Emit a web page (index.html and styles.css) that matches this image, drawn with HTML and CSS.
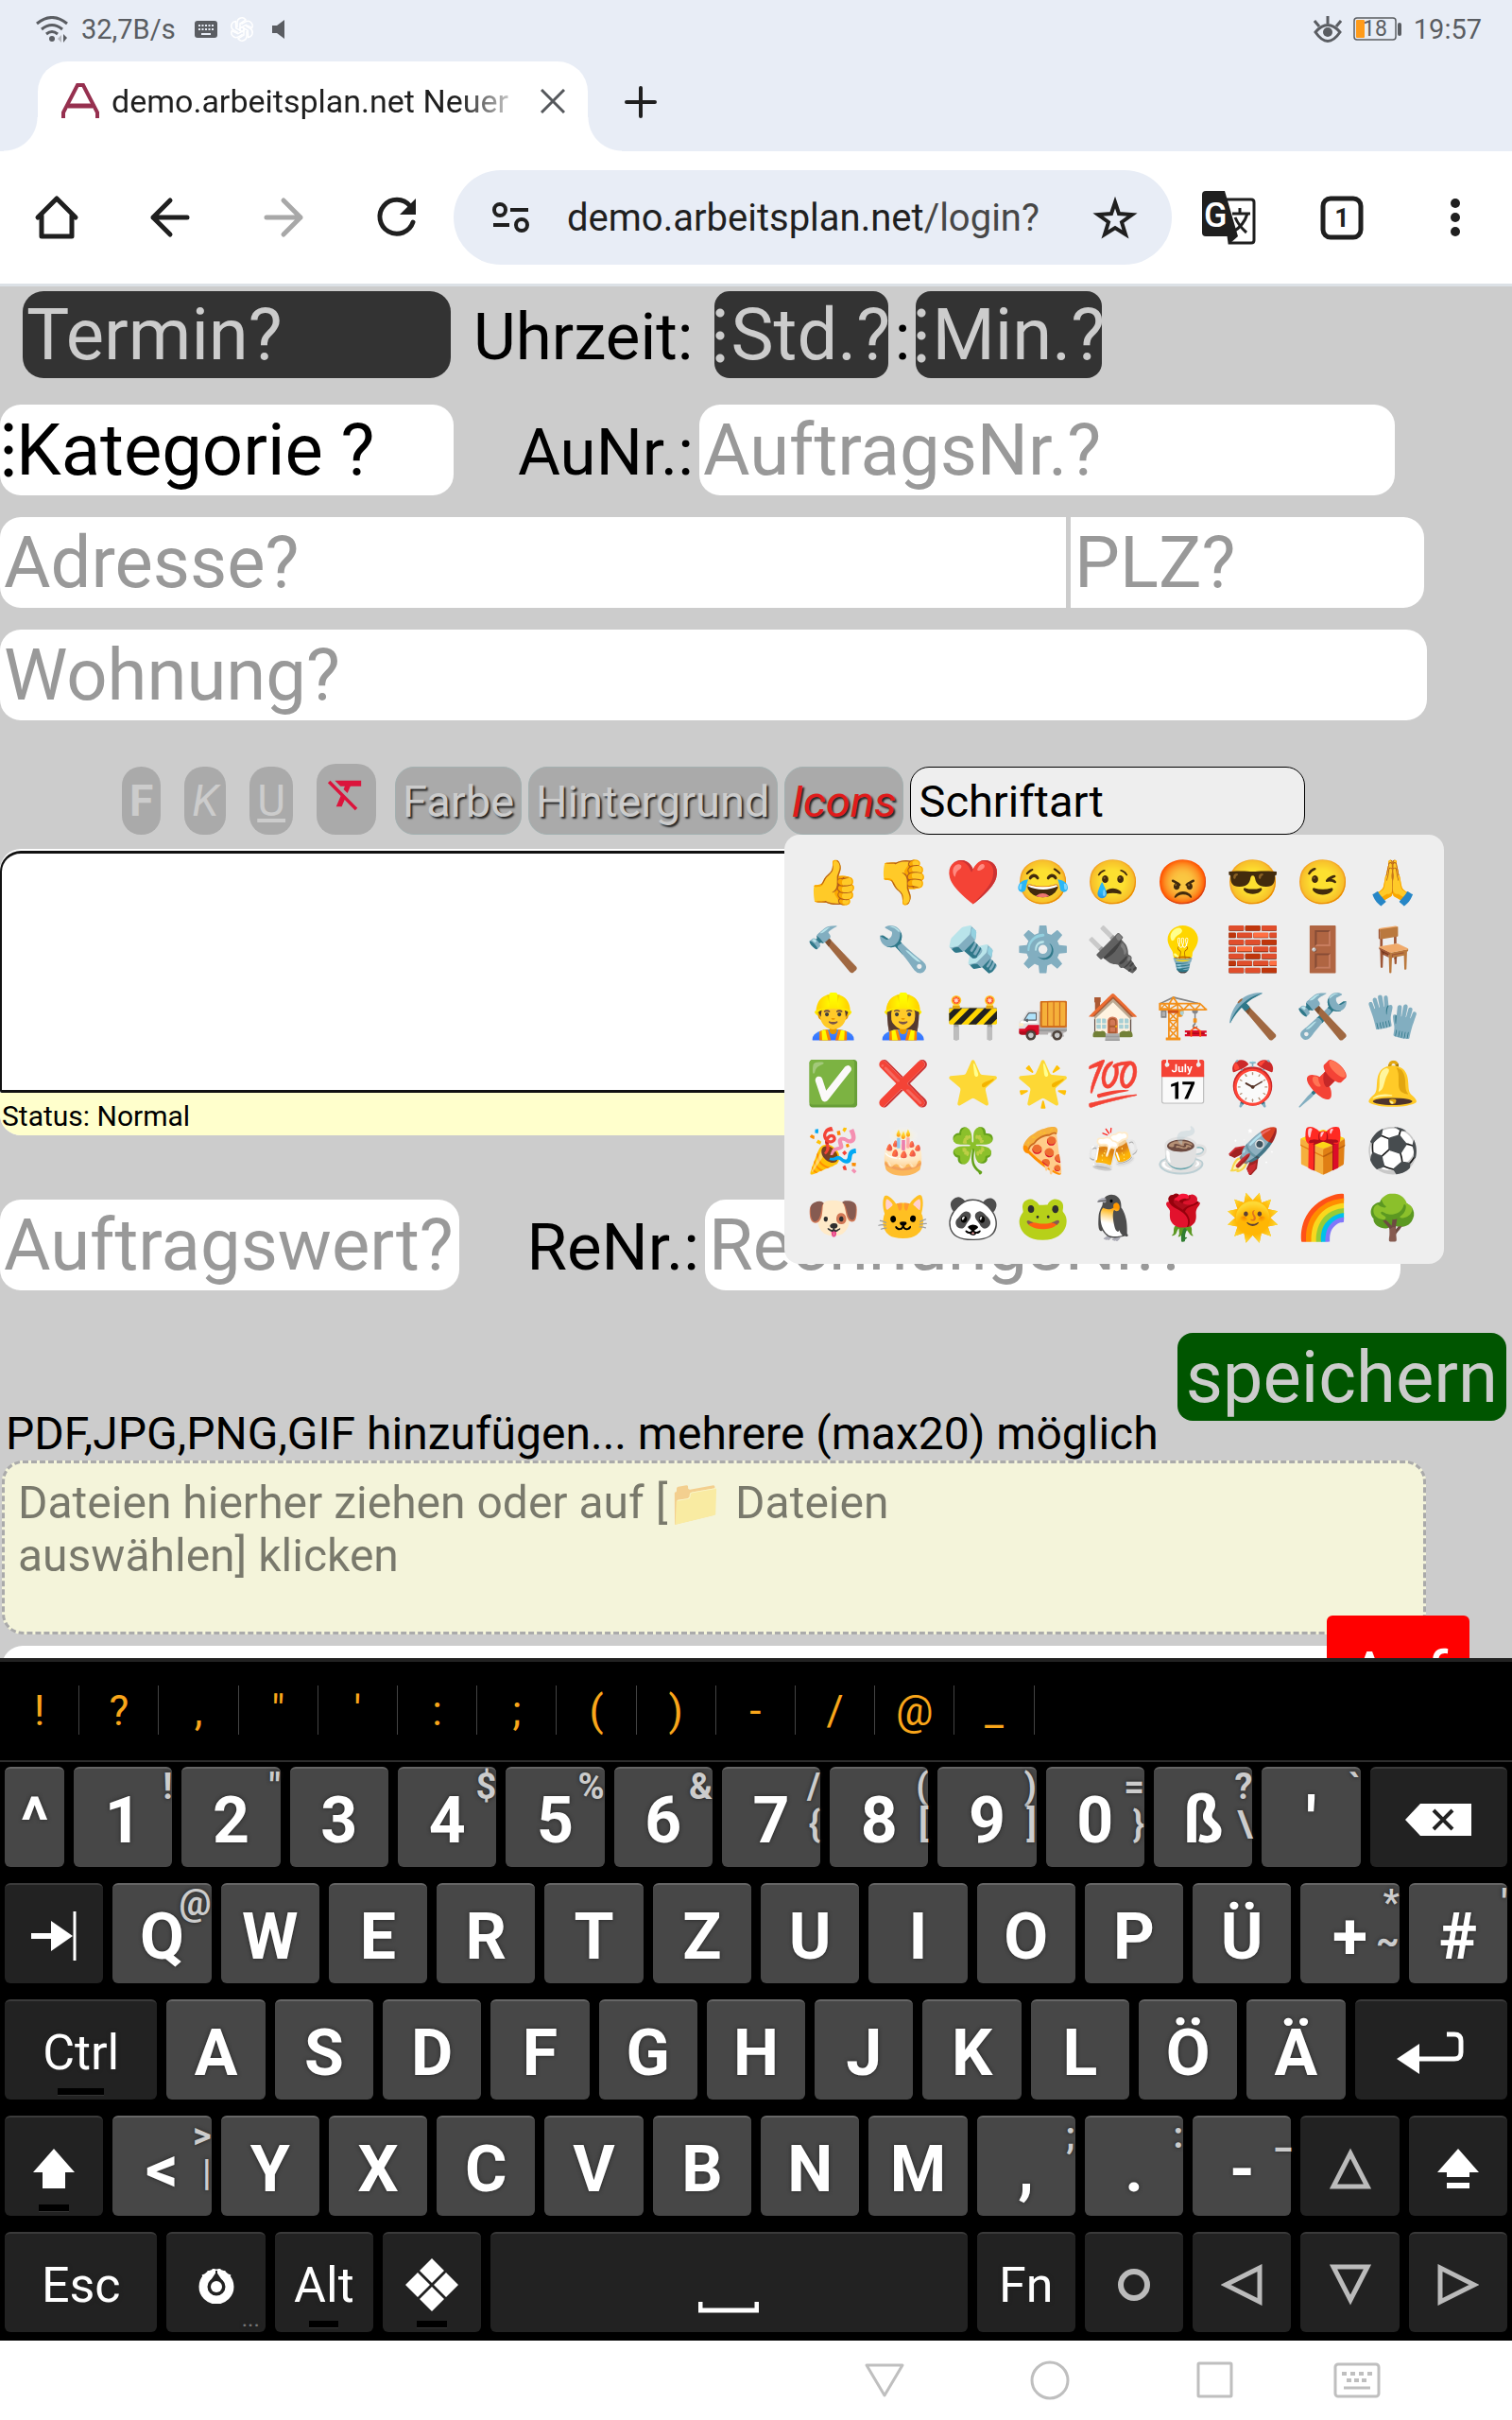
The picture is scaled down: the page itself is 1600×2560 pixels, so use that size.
FILE: index.html
```html
<!DOCTYPE html>
<html lang="de">
<head>
    <meta charset="UTF-8">
    <meta name="viewport" content="width=device-width, initial-scale=1.0">
    <title>demo.arbeitsplan.net Neuer Auftrag</title>
    <link rel="stylesheet" href="styles.css">
</head>
<body>
    <!-- System status bar -->
    <div class="status-bar">
        <svg class="status-icon" width="34" height="28" viewBox="0 0 34 28" fill="none" stroke="#5a5d62" stroke-width="3">
            <path d="M1 8Q17-5 33 8"/><path d="M6 14Q17 5 28 14"/><path d="M11 19Q17 14 23 19"/>
            <circle cx="17" cy="24" r="3" fill="#5a5d62" stroke="none"/>
            <path d="M27 20v8l-4-4z" fill="#b5b8be" stroke="none"/><path d="M29 19v9l4-5z" fill="#5a5d62" stroke="none"/>
        </svg>
        <span class="net-speed">32,7B/s</span>
        <svg class="status-icon" width="24" height="18" viewBox="0 0 24 18">
            <rect width="24" height="18" rx="3" fill="#5a5d62"/>
            <path d="M4 5h16M4 9h16" stroke="#e8edf6" stroke-width="2" stroke-dasharray="2 1.5"/>
            <path d="M7 14h10" stroke="#e8edf6" stroke-width="2"/>
        </svg>
        <svg class="status-icon" width="28" height="28" viewBox="0 0 28 28" fill="none" stroke="#fff" stroke-width="1.5">
            <g id="knot"><path d="M9 12V6a5 5 0 0 1 9-2l-6 4v8"/></g>
            <use href="#knot" transform="rotate(60 14 14)"/><use href="#knot" transform="rotate(120 14 14)"/>
            <use href="#knot" transform="rotate(180 14 14)"/><use href="#knot" transform="rotate(240 14 14)"/>
            <use href="#knot" transform="rotate(300 14 14)"/>
        </svg>
        <svg class="status-icon speaker" width="14" height="20" viewBox="0 0 14 20" fill="#5a5d62"><path d="M0 6h5l8-6v20l-8-6H0z"/></svg>
        <div class="status-right">
            <svg width="30" height="28" viewBox="0 0 30 28" fill="none" stroke="#5a5d62" stroke-width="3">
                <path d="M2 17Q15 2 28 17Q15 36 2 17z"/><path d="M15 0v8M1 5l5 6M29 5l-5 6"/>
                <circle cx="15" cy="17" r="5" fill="#5a5d62" stroke="none"/>
            </svg>
            <svg width="52" height="26" viewBox="0 0 52 26">
                <rect x="1" y="1" width="44" height="23" rx="3" fill="none" stroke="#5a5d62" stroke-width="1.5"/>
                <rect x="3" y="3" width="9" height="19" rx="1" fill="#ff9b1a"/>
                <rect x="47" y="6" width="4" height="14" rx="2" fill="#5a5d62"/>
                <text x="23" y="20" text-anchor="middle" class="battery-text">18</text>
            </svg>
            <span>19:57</span>
        </div>
    </div>

    <!-- Browser tabs -->
    <div class="tab-strip">
        <div class="tab">
            <svg width="42" height="40" viewBox="0 0 42 40" fill="none" stroke="#96304f">
                <path d="M3 38v-6L18 3h6l15 29v6" stroke-width="4"/><path d="M8 25h26" stroke-width="5"/>
            </svg>
            <span class="tab-title">demo.arbeitsplan.net Neuer</span>
            <button class="tab-close" aria-label="Tab schließen">
                <svg width="26" height="26" viewBox="0 0 26 26" stroke="#55585c" stroke-width="3"><path d="M1 1l24 24M25 1L1 25"/></svg>
            </button>
        </div>
        <button class="tab-new" aria-label="Neuer Tab">
            <svg width="34" height="34" viewBox="0 0 34 34" stroke="#1f1f1f" stroke-width="4" stroke-linecap="round"><path d="M17 2v30M2 17h30"/></svg>
        </button>
    </div>

    <div class="browser-bar">
        <button class="bar-button" aria-label="Startseite">
            <svg width="48" height="48" viewBox="0 0 48 48" fill="none" stroke="#1f1f1f" stroke-width="5" stroke-linejoin="round" stroke-linecap="round"><path d="M4 24L24 4l20 20M8 22v22h32V22"/></svg>
        </button>
        <button class="bar-button" aria-label="Zurück">
            <svg width="44" height="44" viewBox="0 0 44 44" fill="none" stroke="#1f1f1f" stroke-width="5" stroke-linecap="round" stroke-linejoin="round"><path d="M40 22H4M22 4L4 22l18 18"/></svg>
        </button>
        <button class="bar-button" aria-label="Vorwärts" disabled>
            <svg width="44" height="44" viewBox="0 0 44 44" fill="none" stroke="#a8a8a8" stroke-width="5" stroke-linecap="round" stroke-linejoin="round"><path d="M4 22h36M22 4l18 18-18 18"/></svg>
        </button>
        <button class="bar-button" aria-label="Neu laden">
            <svg width="44" height="44" viewBox="0 0 44 44" fill="none" stroke="#1f1f1f" stroke-width="5" stroke-linecap="round"><path d="M39 27A18 18 0 1 1 36 10"/><path d="M42 2v17H25z" fill="#1f1f1f" stroke="none"/></svg>
        </button>
        <div class="omnibox">
            <svg class="omni-icon" width="120" height="40" viewBox="0 0 120 40" fill="none" stroke="#1f1f1f" stroke-width="4">
                <circle cx="49" cy="12" r="6"/><path d="M60 12h19M42 28h17"/><circle cx="72" cy="28" r="6"/>
            </svg>
            <a class="url" href="#">demo.arbeitsplan.net<span>/login?</span></a>
            <button class="bar-button" aria-label="Lesezeichen">
                <svg width="48" height="48" viewBox="0 0 48 48" fill="none" stroke="#1f1f1f" stroke-width="4"><path d="M24 8l4 12 14 1-11 8 4 13-11-7-11 7 4-13-11-8 14-1z"/></svg>
            </button>
        </div>
        <button class="bar-button" aria-label="Übersetzen">
            <svg width="58" height="58" viewBox="0 0 58 58">
                <path d="M24 10h29q3 0 3 3v40q0 3-3 3H30z" fill="#fff" stroke="#1f1f1f" stroke-width="3"/>
                <path d="M5 1h20l14 48H5q-4 0-4-4V5q0-4 4-4z" fill="#1f1f1f"/><path d="M28 49h11l-9 8z" fill="#1f1f1f"/>
                <text x="3" y="39" class="tr-g">G</text>
                <g fill="none" stroke="#1f1f1f" stroke-width="3"><path d="M33 25h19M41 19v6M49 25q-4 13-15 19M36 29q4 9 12 16"/></g>
            </svg>
        </button>
        <button class="bar-button" aria-label="Tabs">
            <svg width="48" height="48" viewBox="0 0 48 48"><rect x="4" y="4" width="40" height="41" rx="8" fill="none" stroke="#1f1f1f" stroke-width="5"/><text x="24" y="34" text-anchor="middle" class="tab-count">1</text></svg>
        </button>
        <button class="bar-button" aria-label="Menü">
            <svg width="12" height="42" viewBox="0 0 12 42" fill="#1f1f1f"><circle cx="6" cy="6" r="5"/><circle cx="6" cy="21" r="5"/><circle cx="6" cy="36" r="5"/></svg>
        </button>
    </div>

    <!-- Order form -->
    <main class="page">
        <form class="order-form">
            <div class="row row-date">
                <input class="field dark date" type="text" placeholder="Termin?" aria-label="Termin">
                <label class="label" for="std">Uhrzeit:</label>
                <span class="picker hour"><select class="field dark" id="std"><option>Std.?</option></select></span>
                <span class="label colon">:</span>
                <span class="picker minute"><select class="field dark" aria-label="Minuten"><option>Min.?</option></select></span>
            </div>
            <div class="row">
                <span class="picker category"><select class="field" aria-label="Kategorie"><option>Kategorie ?</option></select></span>
                <label class="label wide" for="aunr">AuNr.:</label>
                <input class="field number" id="aunr" type="text" placeholder="AuftragsNr.?">
            </div>
            <div class="row address-row">
                <input class="field address" type="text" placeholder="Adresse?" aria-label="Adresse">
                <input class="field zip" type="text" placeholder="PLZ?" aria-label="PLZ">
            </div>
            <div class="row">
                <input class="field flat" type="text" placeholder="Wohnung?" aria-label="Wohnung">
            </div>

            <div class="tools">
                <div class="tools-format">
                    <button type="button" class="tool small"><b>F</b></button>
                    <button type="button" class="tool small"><i>K</i></button>
                    <button type="button" class="tool small"><u>U</u></button>
                    <button type="button" class="tool clear" aria-label="Formatierung entfernen">
                        <svg width="47" height="47" viewBox="0 0 24 24" fill="#dc143c"><path d="M3.27 5L2 6.27l6.97 6.97L6.5 19h3l1.57-3.66L16.73 21 18 19.73 3.55 5.27 3.27 5zM6 5v.18L8.82 8h2.4l-.72 1.68 2.1 2.1L14.21 8H20V5H6z"/></svg>
                    </button>
                </div>
                <div class="tools-menu">
                    <button type="button" class="tool menu">Farbe</button>
                    <button type="button" class="tool menu">Hintergrund</button>
                    <div class="icons-menu">
                        <button type="button" class="tool menu active">Icons</button>
                        <div class="emoji-popup">
                            <button type="button">👍</button><button type="button">👎</button><button type="button">❤️</button><button type="button">😂</button><button type="button">😢</button><button type="button">😡</button><button type="button">😎</button><button type="button">😉</button><button type="button">🙏</button>
                            <button type="button">🔨</button><button type="button">🔧</button><button type="button">🔩</button><button type="button">⚙️</button><button type="button">🔌</button><button type="button">💡</button><button type="button">🧱</button><button type="button">🚪</button><button type="button">🪑</button>
                            <button type="button">👷‍♂️</button><button type="button">👷‍♀️</button><button type="button">🚧</button><button type="button">🚚</button><button type="button">🏠</button><button type="button">🏗️</button><button type="button">⛏️</button><button type="button">🛠️</button><button type="button">🧤</button>
                            <button type="button">✅</button><button type="button">❌</button><button type="button">⭐</button><button type="button">🌟</button><button type="button">💯</button><button type="button">📅</button><button type="button">⏰</button><button type="button">📌</button><button type="button">🔔</button>
                            <button type="button">🎉</button><button type="button">🎂</button><button type="button">🍀</button><button type="button">🍕</button><button type="button">🍻</button><button type="button">☕</button><button type="button">🚀</button><button type="button">🎁</button><button type="button">⚽</button>
                            <button type="button">🐶</button><button type="button">🐱</button><button type="button">🐼</button><button type="button">🐸</button><button type="button">🐧</button><button type="button">🌹</button><button type="button">🌞</button><button type="button">🌈</button><button type="button">🌳</button>
                        </div>
                    </div>
                    <select class="font-select" aria-label="Schriftart"><option>Schriftart</option></select>
                </div>
            </div>

            <div class="editor">
                <textarea class="editor-text" aria-label="Beschreibung"></textarea>
                <div class="editor-status">Status: Normal</div>
            </div>

            <div class="row row-value">
                <input class="field value" type="text" placeholder="Auftragswert?" aria-label="Auftragswert">
                <label class="label wide" for="renr">ReNr.:</label>
                <input class="field number" id="renr" type="text" placeholder="RechnungsNr.?">
            </div>

            <div class="save-row">
                <label class="upload-label" for="files">PDF,JPG,PNG,GIF hinzufügen... mehrere (max20) möglich</label>
                <button type="button" class="save">speichern</button>
            </div>
            <button type="button" class="dropzone" id="files"><span>Dateien hierher ziehen oder auf [📁 Dateien auswählen] klicken</span></button>
            <div class="upload-list"></div>
        </form>
        <button class="up-button">Auf</button>
    </main>

    <!-- On-screen keyboard -->
    <div class="keyboard">
        <div class="suggestions">
            <button>!</button><button>?</button><button>,</button><button>"</button><button>'</button><button>:</button><button>;</button><button>(</button><button>)</button><button>-</button><button>/</button><button>@</button><button>_</button>
        </div>
        <div class="keys">
            <div class="key-row numbers">
                <button class="key">^</button>
                <button class="key">1<sup>!</sup></button>
                <button class="key">2<sup>"</sup></button>
                <button class="key">3</button>
                <button class="key">4<sup>$</sup></button>
                <button class="key">5<sup>%</sup></button>
                <button class="key">6<sup>&amp;</sup></button>
                <button class="key">7<sup>/</sup><sub>{</sub></button>
                <button class="key">8<sup>(</sup><sub>[</sub></button>
                <button class="key">9<sup>)</sup><sub>]</sub></button>
                <button class="key">0<sup>=</sup><sub>}</sub></button>
                <button class="key">ß<sup>?</sup><sub>\</sub></button>
                <button class="key">'<sup>`</sup></button>
                <button class="key dark-key" aria-label="Löschen">
                    <svg width="70" height="36" viewBox="0 0 70 36"><path d="M0 18L16 1h54v34H16z" fill="#fff"/><path d="M30 8l20 20M50 8L30 28" stroke="#222" stroke-width="4"/></svg>
                </button>
            </div>
            <div class="key-row">
                <button class="key dark-key" aria-label="Tab">
                    <svg width="48" height="54" viewBox="0 0 48 54"><path d="M0 24h21V11l23 16-23 16V30H0z" fill="#fff"/><path d="M46 1v52" stroke="#fff" stroke-width="3"/></svg>
                </button>
                <button class="key">Q<sup>@</sup></button>
                <button class="key">W</button>
                <button class="key">E</button>
                <button class="key">R</button>
                <button class="key">T</button>
                <button class="key">Z</button>
                <button class="key">U</button>
                <button class="key">I</button>
                <button class="key">O</button>
                <button class="key">P</button>
                <button class="key">Ü</button>
                <button class="key">+<sup>*</sup><sub>~</sub></button>
                <button class="key">#<sup>'</sup></button>
            </div>
            <div class="key-row">
                <button class="key dark-key wide-key lock">Ctrl</button>
                <button class="key">A</button>
                <button class="key">S</button>
                <button class="key">D</button>
                <button class="key">F</button>
                <button class="key">G</button>
                <button class="key">H</button>
                <button class="key">J</button>
                <button class="key">K</button>
                <button class="key">L</button>
                <button class="key">Ö</button>
                <button class="key">Ä</button>
                <button class="key dark-key wide-key" aria-label="Eingabe">
                    <svg width="72" height="46" viewBox="0 0 72 46"><path d="M53 4h8q7 0 7 7v12q0 7-7 7H20" fill="none" stroke="#fff" stroke-width="5"/><path d="M0 30l24-16v32z" fill="#fff"/></svg>
                </button>
            </div>
            <div class="key-row">
                <button class="key dark-key lock" aria-label="Umschalt">
                    <svg width="44" height="44" viewBox="0 0 44 44" fill="#fff"><path d="M22 1l22 25H34v17H10V26H0z"/></svg>
                </button>
                <button class="key">&lt;<sup>&gt;</sup><sub>|</sub></button>
                <button class="key">Y</button>
                <button class="key">X</button>
                <button class="key">C</button>
                <button class="key">V</button>
                <button class="key">B</button>
                <button class="key">N</button>
                <button class="key">M</button>
                <button class="key">,<sup>;</sup></button>
                <button class="key">.<sup>:</sup></button>
                <button class="key">-<sup>_</sup></button>
                <button class="key dark-key" aria-label="Hoch">
                    <svg width="44" height="44" viewBox="0 0 44 44" fill="none" stroke="#bbb" stroke-width="5"><path d="M22 6l18 35H4z"/></svg>
                </button>
                <button class="key dark-key" aria-label="Feststelltaste">
                    <svg width="44" height="44" viewBox="0 0 44 44" fill="#fff"><path d="M22 1l22 25H34v5H10v-5H0zM10 37h24v6H10z"/></svg>
                </button>
            </div>
            <div class="key-row">
                <button class="key dark-key wide-key">Esc</button>
                <button class="key dark-key more" aria-label="Einstellungen">
                    <svg width="40" height="40" viewBox="0 0 40 40" fill="none" stroke="#fff"><circle cx="20" cy="22" r="14" stroke-width="9"/><circle cx="20" cy="22" r="6" fill="#fff" stroke="none"/><path d="M7 12l-1-3M12 8V5M17 6V3M23 6V3M28 8V5M33 12l1-3" stroke-width="3"/><path d="M20 5v7M20 8l-4 6h8z" stroke="#222" stroke-width="2" fill="#222"/></svg>
                </button>
                <button class="key dark-key lock">Alt</button>
                <button class="key dark-key lock" aria-label="Meta">
                    <svg width="56" height="56" viewBox="0 0 56 56" fill="#fff"><path d="M28 0l13 13-13 13-13-13zM28 30l13 13-13 13-13-13zM13 15l13 13-13 13L0 28zM43 15l13 13-13 13-13-13z"/></svg>
                </button>
                <button class="key dark-key space-key" aria-label="Leertaste">
                    <svg width="64" height="12" viewBox="0 0 64 12" fill="none" stroke="#fff" stroke-width="5"><path d="M2 0v9h60V0"/></svg>
                </button>
                <button class="key dark-key">Fn</button>
                <button class="key dark-key" aria-label="Mitte">
                    <svg width="36" height="36" viewBox="0 0 36 36" fill="none" stroke="#bbb" stroke-width="6"><circle cx="18" cy="18" r="14"/></svg>
                </button>
                <button class="key dark-key" aria-label="Links">
                    <svg width="44" height="44" viewBox="0 0 44 44" fill="none" stroke="#bbb" stroke-width="5"><path d="M5 22L41 4v36z"/></svg>
                </button>
                <button class="key dark-key" aria-label="Runter">
                    <svg width="44" height="44" viewBox="0 0 44 44" fill="none" stroke="#bbb" stroke-width="5"><path d="M4 3h36L22 38z"/></svg>
                </button>
                <button class="key dark-key" aria-label="Rechts">
                    <svg width="44" height="44" viewBox="0 0 44 44" fill="none" stroke="#bbb" stroke-width="5"><path d="M3 4v36l36-18z"/></svg>
                </button>
            </div>
        </div>
    </div>

    <!-- System navigation -->
    <nav class="nav-bar">
        <button aria-label="Zurück"><svg width="44" height="40" viewBox="0 0 44 40" fill="none" stroke="#bfbfbf" stroke-width="3" stroke-linejoin="round"><path d="M3 4h38L22 36z"/></svg></button>
        <button aria-label="Start"><svg width="44" height="44" viewBox="0 0 44 44" fill="none" stroke="#bfbfbf" stroke-width="3"><circle cx="22" cy="22" r="19"/></svg></button>
        <button aria-label="Übersicht"><svg width="40" height="40" viewBox="0 0 40 40" fill="none" stroke="#bfbfbf" stroke-width="3"><rect x="2" y="2" width="35" height="35" rx="1"/></svg></button>
        <button class="nav-keyboard" aria-label="Tastatur">
            <svg width="50" height="38" viewBox="0 0 50 38" fill="none" stroke="#bfbfbf" stroke-width="3"><rect x="2" y="2" width="46" height="34" rx="3"/><path d="M9 12h33" stroke-width="4" stroke-dasharray="5 4"/><path d="M14 19h24" stroke-width="4" stroke-dasharray="5 3"/><path d="M11 27h28"/></svg>
        </button>
    </nav>
</body>
</html>
```

FILE: styles.css
```css
* {
    box-sizing: border-box;
}

body {
    font-family: Roboto, "Noto Color Emoji", sans-serif;
    margin: 0;
    height: 100vh;
    display: flex;
    flex-direction: column;
    background: #fff;
    color: #000;
}

button,
input,
select,
textarea {
    font-family: inherit;
    margin: 0;
    border: none;
    padding: 0;
}

button {
    background: none;
    color: inherit;
    cursor: pointer;
}

svg {
    display: block;
    flex: none;
}

/* Status bar */
.status-bar {
    display: flex;
    align-items: center;
    height: 65px;
    padding: 0 32px 4px 38px;
    background: #e8edf6;
    color: #5a5d62;
    font-size: 29px;
}

.net-speed {
    margin: 0 20px 0 14px;
}

.status-icon + .status-icon {
    margin-left: 12px;
}

.status-icon.speaker {
    margin-left: 18px;
}

.status-right {
    display: flex;
    align-items: center;
    gap: 12px;
    margin-left: auto;
}

.battery-text {
    font-size: 23px;
    fill: #5a5d62;
}

/* Tabs */
.tab-strip {
    display: flex;
    align-items: center;
    height: 95px;
    padding-left: 40px;
    background: #e8edf6;
}

.tab {
    position: relative;
    display: flex;
    align-items: center;
    width: 582px;
    height: 100%;
    padding: 0 24px 12px;
    border-radius: 32px 32px 0 0;
    background: #fff;
}

.tab::before,
.tab::after {
    content: "";
    position: absolute;
    bottom: 0;
    width: 36px;
    height: 36px;
}

.tab::before {
    right: 100%;
    background: radial-gradient(circle at 0 0, #e8edf6 35px, #fff 36px);
}

.tab::after {
    left: 100%;
    background: radial-gradient(circle at 100% 0, #e8edf6 35px, #fff 36px);
}

.tab-title {
    flex: 1;
    margin: 0 16px 0 12px;
    overflow: hidden;
    white-space: nowrap;
    font-size: 34px;
    color: #1f1f1f;
    mask-image: linear-gradient(to right, #000 84%, transparent);
}

.tab-new {
    margin-left: 39px;
    padding-bottom: 10px;
}

/* Address bar */
.browser-bar {
    display: flex;
    align-items: center;
    height: 143px;
    border-bottom: 3px solid #dce1e6;
}

.bar-button {
    display: flex;
    align-items: center;
    justify-content: center;
    width: 120px;
    height: 100px;
}

.omnibox {
    display: flex;
    align-items: center;
    flex: 1;
    height: 100px;
    border-radius: 50px;
    background: #e8edf6;
}

.url {
    flex: 1;
    font-size: 40px;
    color: #1f1f1f;
    text-decoration: none;
    white-space: nowrap;
}

.url span {
    color: #474747;
}

.tr-g {
    font-size: 36px;
    font-weight: 500;
    fill: #fff;
}

.tab-count {
    font-size: 27px;
    font-weight: 700;
    fill: #1f1f1f;
}

/* Form */
.page {
    position: relative;
    flex: 1;
    min-height: 0;
    overflow: hidden;
    background: #ccc;
}

.order-form {
    padding-top: 5px;
}

.row {
    display: flex;
    align-items: center;
    margin-bottom: 23px;
}

.field {
    width: 100%;
    height: 96px;
    padding: 0 4px;
    border-radius: 22px;
    background: #fff;
    color: #000;
    font-size: 76px;
    appearance: none;
}

.field::placeholder {
    color: #999;
    opacity: 1;
}

.field.dark {
    height: 92px;
    background: #333;
    color: #ccc;
}

.field.dark::placeholder {
    color: #ccc;
}

.label {
    padding-top: 4px;
    font-size: 69px;
}

.label.wide {
    width: 260px;
    padding-right: 6px;
    text-align: right;
}

.label.colon {
    width: 29px;
    text-align: center;
}

.date.field {
    width: 453px;
    margin: 0 24px;
}

.row-date {
    margin-bottom: 28px;
}

/* three dots in front of a select */
.picker {
    position: relative;
    color: #000;
}

.picker::before {
    content: "";
    position: absolute;
    left: 4px;
    top: 12px;
    width: 10px;
    height: 72px;
    background: radial-gradient(circle, currentColor 4px, transparent 5px) 0 0 / 10px 24px;
    pointer-events: none;
}

.picker .field {
    display: block;
    padding: 0 0 0 17px;
}

.picker.hour,
.picker.minute {
    color: #ccc;
}

.picker.hour::before,
.picker.minute::before {
    left: 1px;
    top: 11px;
}

.picker.hour .field,
.picker.minute .field {
    border-radius: 16px;
}

.picker.hour {
    width: 184px;
    margin-left: 23px;
}

.picker.minute {
    width: 197px;
}

.picker.category {
    width: 30%;
}

.row .number {
    width: 46%;
}

.address-row {
    gap: 5px;
}

.field.address {
    width: 70.5%;
    border-radius: 22px 0 0 22px;
}

.field.zip {
    width: 23.4%;
    border-radius: 0 22px 22px 0;
}

.field.flat {
    width: 94.4%;
}

.field.value {
    width: 486px;
}

/* Editor toolbar */
.tools {
    display: flex;
    align-items: flex-end;
    gap: 20px;
    margin-top: 46px;
    padding-left: 129px;
}

.tools-format {
    display: flex;
    align-items: flex-end;
    gap: 25px;
}

.tools-menu {
    display: flex;
    flex: 1;
    gap: 7px;
}

.tool {
    height: 72px;
    padding: 0 8px;
    border-radius: 20px;
    background: #aaa;
    color: #ccc;
    font-size: 46px;
}

.tool.clear {
    height: 75px;
    display: flex;
    align-items: flex-start;
    padding-top: 8px;
}

.tool.menu {
    padding: 0 7px;
    border: 1px solid #a3b0b0;
    font-size: 47px;
    text-shadow: 2px 2px 2px #222;
}

.tool.active {
    color: #e01b1b;
    font-style: italic;
}

.icons-menu {
    position: relative;
}

.emoji-popup {
    position: absolute;
    top: 100%;
    left: 0;
    z-index: 2;
    display: grid;
    grid-template-columns: repeat(9, 74px);
    grid-auto-rows: 71px;
    padding: 14px 16px;
    border-radius: 16px;
    background: #eee;
}

.emoji-popup button {
    font-size: 46px;
    line-height: 1;
    white-space: nowrap;
    display: flex;
    align-items: center;
    justify-content: center;
}

.font-select {
    width: 418px;
    height: 72px;
    padding: 0 8px;
    border: 1px solid #000;
    border-radius: 20px;
    background: #eee;
    color: #000;
    font-size: 47px;
    appearance: none;
}

.editor {
    width: 94.4%;
    margin-top: 15px;
    overflow: hidden;
    border-radius: 22px;
    background: #fff;
    padding-top: 2px;
}

.editor-text {
    display: block;
    width: 100%;
    height: 256px;
    border: 3px solid #111;
    border-width: 3px 2px;
    border-radius: 22px 22px 2px 2px;
    background: #fff;
    font-size: 46px;
    resize: none;
}

.editor-status {
    padding: 7px 2px 3px;
    background: #ffc;
    font-size: 30px;
    line-height: 35px;
}

.row-value {
    margin: 68px 0 45px;
}

.save-row {
    display: flex;
    justify-content: space-between;
    height: 135px;
    padding: 0 6px;
}

.upload-label {
    align-self: flex-end;
    font-size: 48px;
    line-height: 56px;
}

.save {
    height: 93px;
    padding: 0 9px;
    border-radius: 16px;
    background: #050;
    color: #ccc;
    font-size: 76px;
    line-height: 92px;
}

.dropzone {
    display: block;
    width: 94.2%;
    height: 184px;
    margin: 0 2px;
    padding: 14px;
    border: 3px dashed #aaa;
    border-radius: 22px;
    background: #f4f4da;
    color: #000;
    font-size: 48px;
    line-height: 56px;
    text-align: left;
}

.dropzone span {
    display: block;
    width: 70%;
    height: 100%;
    opacity: 0.5;
}

.upload-list {
    width: 94.2%;
    height: 96px;
    margin: 12px 2px 0;
    border-radius: 22px;
    background: #fff;
}

.up-button {
    position: absolute;
    right: 45px;
    bottom: -83px;
    width: 151px;
    height: 128px;
    border-radius: 6px;
    background: #f00;
    color: #fff;
    font-size: 68px;
}

/* Keyboard */
.keyboard {
    border-top: 4px solid #222;
    background: #000;
}

.suggestions {
    display: flex;
    padding: 25px 0 27px;
    border-bottom: 2px solid #2d2d2d;
}

.suggestions button {
    width: calc(100% / 19);
    height: 52px;
    border-right: 1px solid #444;
    color: #f9a61a;
    font-size: 44px;
    line-height: 54px;
}

.keys {
    display: grid;
    gap: 17px;
    padding: 5px 5px 9px;
}

.key-row {
    display: grid;
    grid-template-columns: repeat(28, 1fr);
    gap: 10px;
}

.key-row.numbers {
    grid-template-columns: 63fr repeat(12, 104fr) 145fr;
}

.key {
    position: relative;
    grid-column: span 2;
    display: flex;
    align-items: center;
    justify-content: center;
    height: 106px;
    padding-top: 6px;
    border-top: 2px solid #666;
    border-radius: 6px;
    background: #474747;
    color: #fff;
    font-size: 68px;
    font-weight: 700;
    text-shadow: 0 0 4px #222;
}

.numbers .key {
    grid-column: span 1;
}

.key.dark-key {
    padding-top: 4px;
    border-top-color: #3a3a3a;
    background: #222;
    font-size: 52px;
    font-weight: 400;
}

.key.wide-key {
    grid-column: span 3;
}

.key.space-key {
    grid-column: span 9;
    align-items: flex-end;
    padding-bottom: 20px;
}

.key sup,
.key sub {
    position: absolute;
    right: 0;
    color: #ccc;
    font-size: 38px;
    font-weight: 700;
    line-height: 38px;
}

.key sup {
    top: 0;
}

.key sub {
    bottom: 26px;
}

/* slot for the lock indicator */
.key.lock::after {
    content: "";
    position: absolute;
    bottom: 4px;
    left: 35%;
    width: 30%;
    height: 7px;
    border-bottom: 1px solid #333;
    background: #000;
}

.key.more::after {
    content: "...";
    position: absolute;
    right: 6px;
    bottom: 0;
    color: #777;
    font-size: 24px;
}

/* Navigation */
.nav-bar {
    display: flex;
    align-items: center;
    justify-content: flex-end;
    height: 84px;
    padding-right: 102px;
    background: #fff;
}

.nav-bar button {
    display: flex;
    justify-content: center;
    width: 175px;
}

.nav-bar .nav-keyboard {
    width: 125px;
}
```
